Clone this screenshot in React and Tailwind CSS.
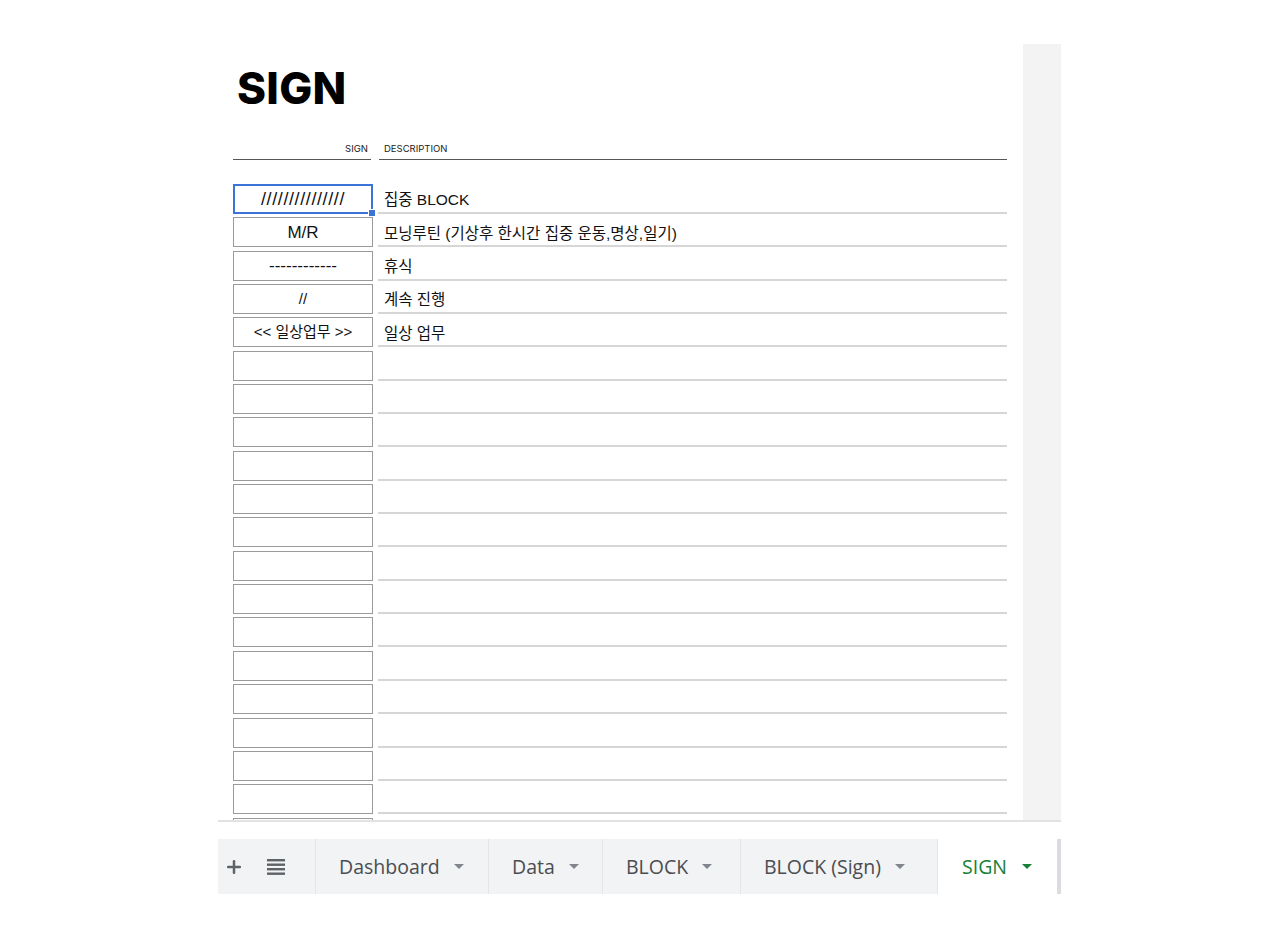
import { Plus } from 'lucide-react'

const rows = [
  { sign: '///////////////', desc: '집중 BLOCK', big: true },
  { sign: 'M/R', desc: '모닝루틴 (기상후 한시간 집중 운동,명상,일기)' },
  { sign: '------------', desc: '휴식' },
  { sign: '//', desc: '계속 진행', small: true },
  { sign: '<< 일상업무 >>', desc: '일상 업무', small: true },
  ...Array.from({ length: 15 }, () => ({ sign: '', desc: '' })),
]

const tabs = [
  { name: 'Dashboard', w: 'w-[173px]' },
  { name: 'Data', w: 'w-[114px]' },
  { name: 'BLOCK', w: 'w-[138px]' },
  { name: 'BLOCK (Sign)', w: 'w-[197px]' },
]

const Caret = ({ green }) => (
  <svg width="10" height="5" viewBox="0 0 10 5" className="shrink-0">
    <path d="M0 0h10L5 5z" fill={green ? '#188038' : '#80868b'} />
  </svg>
)

const SheetRow = ({ row, selected }) => (
  <div className="flex h-[33.35px] items-start">
    <div
      className={`relative flex h-[30px] w-[140px] shrink-0 items-center justify-center bg-white ${
        selected ? 'border-2 border-[#3b73d9]' : 'border-[1.5px] border-[#9a9a9a]'
      } ${row.small ? 'text-[15px]' : 'text-[17px]'} text-[#111]`}
    >
      <span className={row.big ? 'text-[18px] tracking-[0.6px]' : ''}>{row.sign}</span>
      {selected && (
        <span className="absolute -bottom-[5px] -right-[5px] h-[8px] w-[8px] border border-white bg-[#3b73d9]" />
      )}
    </div>
    <div className="ml-[5px] flex h-[30px] w-[629px] items-center border-b-2 border-[#d6d6d6] pl-[6px] pt-[4px] text-[15.5px] text-[#111]">
      {row.desc}
    </div>
  </div>
)

export default function App() {
  return (
    <div className="h-[939px] w-full bg-white font-['Liberation_Sans','Noto_Sans_CJK_KR',sans-serif]">
      <div className="ml-[218px] flex w-[843px] flex-col pt-[44px]">
        <div className="flex h-[778px] border-b-2 border-[#e2e2e2]">
          <div className="w-[805px] overflow-hidden pl-[15px] pt-[18px]">
            <h1 className="ml-[4px] mt-[4px] h-[44px] font-['Inter',sans-serif] text-[44px] font-extrabold leading-[44px] tracking-[0.3px] text-black">
              SIGN
            </h1>
            <div className="mt-[30px] flex h-[20px] items-end font-['Inter',sans-serif] text-[9.5px] text-[#222]">
              <div className="flex h-[20px] w-[138px] items-center justify-end border-b border-[#555] pr-[3px]">
                SIGN
              </div>
              <div className="ml-[8px] flex h-[20px] w-[628px] items-center border-b border-[#555] pl-[5px]">
                DESCRIPTION
              </div>
            </div>
            <div className="mt-[24px] flex flex-col">
              {rows.map((row, i) => (
                <SheetRow key={i} row={row} selected={i === 0} />
              ))}
            </div>
          </div>
          <div className="w-[38px] bg-[#f3f3f3]" />
        </div>
        <div className="mt-[17px] flex h-[55px] bg-[#f1f3f4] font-['Open_Sans','Roboto',sans-serif] text-[19.5px] font-medium text-[#4a4d51]">
          <div className="flex w-[98px] items-center border-r border-[#e3e5e7] pl-[6px]">
            <Plus size={20} strokeWidth={3} className="text-[#5f6368]" />
            <svg width="18" height="16" viewBox="0 0 18 16" className="ml-[23px]">
              <g fill="#5f6368">
                <rect x="0" y="0" width="18" height="2.4" />
                <rect x="0" y="4.5" width="18" height="2.4" />
                <rect x="0" y="9" width="18" height="2.4" />
                <rect x="0" y="13.5" width="18" height="2.4" />
              </g>
            </svg>
          </div>
          {tabs.map(t => (
            <div
              key={t.name}
              className={`flex ${t.w} items-center gap-[14px] border-r border-[#e3e5e7] pl-[23px]`}
            >
              <span>{t.name}</span>
              <Caret />
            </div>
          ))}
          <div className="flex w-[119px] items-center gap-[15px] bg-white pl-[24px] text-[#188038]">
            <span>SIGN</span>
            <Caret green />
          </div>
          <div className="w-[4px] bg-[#dadce0]" />
        </div>
      </div>
    </div>
  )
}
